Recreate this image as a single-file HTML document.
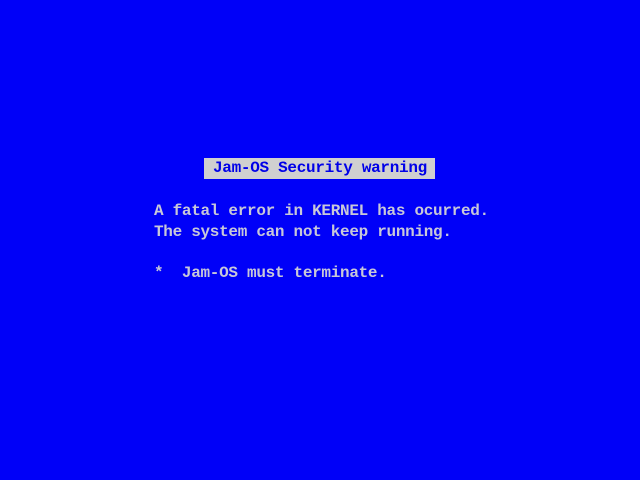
<!DOCTYPE html>
<html><head><meta charset="utf-8"><style>
html,body{margin:0;padding:0;width:640px;height:480px;overflow:hidden;background:#0000f8;}
body{position:relative;font-family:"Liberation Mono","DejaVu Sans Mono",monospace;font-size:16px;letter-spacing:-0.3px;font-weight:bold;}
.t{position:absolute;white-space:pre;color:#c8c8d8;line-height:20.5px;}
.box{position:absolute;left:204px;top:158px;width:231px;height:21px;background:#d0d0d0;}
.box span{position:absolute;left:9px;top:0;line-height:21px;color:#0000e8;white-space:pre;}
</style></head><body>
<div class="box"><span>Jam-OS Security warning</span></div>
<div class="t" style="left:154px;top:201px;">A fatal error in KERNEL has ocurred.
The system can not keep running.

*  Jam-OS must terminate.</div>
</body></html>
